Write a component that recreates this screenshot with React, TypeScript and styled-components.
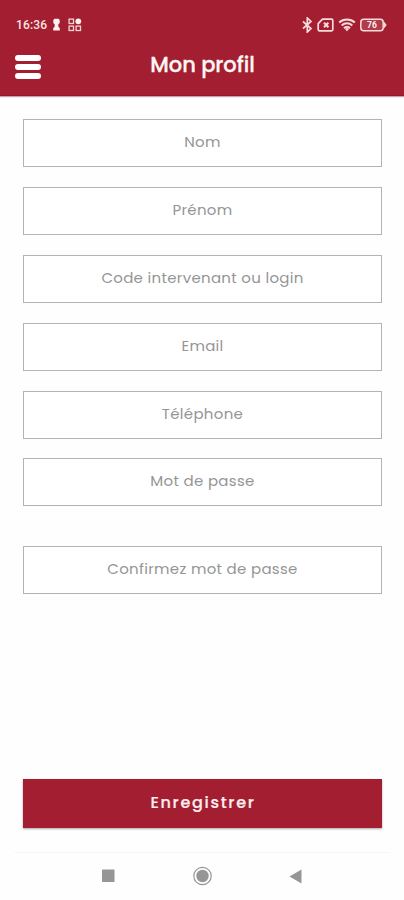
import React from 'react';
import styled, { createGlobalStyle } from 'styled-components';

interface FieldProps {
    label: string;
    separated?: boolean;
}

interface StyledFieldProps {
    $separated?: boolean;
}

const GlobalStyle = createGlobalStyle`
    * {
        box-sizing: border-box;
    }

    body {
        margin: 0;
        background: #fefefe;
        font-family: Poppins, Inter, sans-serif;
    }
`;

const StyledScreen = styled.div`
    display: flex;
    flex-direction: column;
    width: 404px;
    height: 900px;
    overflow: hidden;
    background: #fefefe;
`;

const StyledHeader = styled.header`
    flex: none;
    height: 96px;
    background: #a31e31;
    border-bottom: 1px solid #981526;
    box-shadow: 0 1px 1px rgba(120, 20, 35, 0.4);
`;

const StyledStatusBar = styled.div`
    display: flex;
    align-items: center;
    justify-content: space-between;
    height: 34px;
    padding: 16px 17px 0 16px;
`;

const StyledStatusGroup = styled.div`
    display: flex;
    align-items: center;
    height: 18px;

    svg {
        display: block;
    }
`;

const StyledIcons = styled(StyledStatusGroup)`
    gap: 4px;
`;

const StyledNotifications = styled(StyledStatusGroup)`
    gap: 7px;
`;

const StyledTime = styled.span`
    width: 36px;
    font-family: Roboto, sans-serif;
    font-size: 12px;
    font-weight: 500;
    line-height: 18px;
    letter-spacing: 0.15px;
    color: #fbe5e4;
`;

const StyledToolbar = styled.div`
    display: grid;
    grid-template-columns: 26px 1fr 26px;
    align-items: center;
    height: 61px;
    padding: 0 14px 0 15px;
`;

const StyledMenuButton = styled.button`
    display: flex;
    flex-direction: column;
    gap: 3px;
    margin: 4px 0 0;
    padding: 0;
    border: 0;
    background: none;
`;

const StyledMenuBar = styled.span`
    width: 26px;
    height: 6px;
    border-radius: 3px;
    background: #ffffff;
`;

const StyledTitle = styled.h1`
    margin: 0;
    text-align: center;
    font-size: 21px;
    font-weight: 500;
    line-height: 30px;
    letter-spacing: -0.05px;
    color: #fff6f4;
    -webkit-text-stroke: 0.3px #fff6f4;
`;

const StyledForm = styled.form`
    display: flex;
    flex: 1;
    flex-direction: column;
    padding: 23px 22px 24px 23px;
`;

const StyledField = styled.label<StyledFieldProps>`
    display: flex;
    justify-content: center;
    height: 48px;
    margin-top: ${({ $separated }) => ($separated ? '20px' : 0)};
    margin-bottom: 19.9px;
    padding-top: 11px;
    border: 1px solid #b3b3b3;
    background: #ffffff;
`;

const StyledPlaceholder = styled.span`
    font-size: 15px;
    font-weight: 400;
    line-height: 22px;
    letter-spacing: 0.3px;
    white-space: nowrap;
    color: #959595;
`;

const StyledSubmit = styled.button`
    height: 49px;
    margin-top: auto;
    padding: 0 0 3px 1px;
    border: 0;
    background: #a31e31;
    box-shadow: 0 1px 2px rgba(0, 0, 0, 0.35);
    font-family: inherit;
    font-size: 16px;
    font-weight: 500;
    letter-spacing: 1.7px;
    color: #ffeeee;
    -webkit-text-stroke: 0.2px #ffeeee;
`;

const StyledNavigation = styled.nav`
    display: flex;
    flex: none;
    align-items: center;
    justify-content: space-between;
    height: 48px;
    margin: 0 14px;
    padding: 0 88px 1px 87px;
    border-top: 1px solid #f7f7f7;
`;

const PawnIcon = () => (
    <svg width="9" height="14" viewBox="0 0 9 14" fill="#fff1ef">
        <path d="M2.5.8h4l1.200 1.300v2.800L6.300 6.500v2l1.500 1.700v2.400H1.200v-2.400l1.500-1.700v-2L1.300 4.900V2.100z" />
    </svg>
);

const AppsIcon = () => (
    <svg width="14" height="14" viewBox="0 0 14 14" fill="none" stroke="#f5d2d2" strokeWidth="1.3">
        <rect x="1.1" y="1.1" width="4.4" height="4.4" />
        <rect x="1.1" y="8.1" width="4.4" height="4.4" />
        <rect x="8.1" y="8.1" width="4.4" height="4.4" />
        <circle cx="10.3" cy="3.3" r="2.9" fill="#fff1ef" stroke="none" />
    </svg>
);

const BluetoothIcon = () => (
    <svg width="11" height="16" viewBox="0 0 11 16" fill="none" stroke="#f8dcdb" strokeWidth="1.7">
        <path d="M1 4.5l8 7L5.3 15V1L9 4.5l-8 7" />
    </svg>
);

const SimIcon = () => (
    <svg width="17" height="14" viewBox="0 0 17 14" fill="none" stroke="#f8dcdb" strokeWidth="1.7">
        <path
            d="M5.5 1.2h9a1.3 1.3 0 0 1 1.3 1.3v9a1.3 1.3 0 0 1-1.3 1.3h-12a1.3 1.3 0 0 1-1.3-1.3V5.7z"
            strokeLinejoin="round"
        />
        <path d="M7 4.8l4.4 4.4M11.4 4.8L7 9.2" strokeWidth="2" />
    </svg>
);

const WifiIcon = () => (
    <svg width="18" height="14" viewBox="0 0 18 14" fill="none" stroke="#f8dcdb" strokeWidth="2">
        <path d="M1.2 4.5a11.5 11.5 0 0 1 15.6 0M3.7 7.4a7.8 7.8 0 0 1 10.6 0M6 10.2a4.4 4.4 0 0 1 6 0" />
        <path d="M7 11a3 3 0 0 1 4 0l-2 2.3z" fill="#f8dcdb" stroke="none" />
    </svg>
);

const BatteryIcon = () => (
    <svg width="27" height="14" viewBox="0 0 27 14">
        <rect x="0.8" y="1.3" width="22.4" height="11.4" rx="3" fill="#b03b4b" stroke="#f8dcdb" strokeWidth="1.5" />
        <path d="M24 3.5L26.7 7 24 10.5z" fill="#f8dcdb" />
        <text
            x="12"
            y="10"
            textAnchor="middle"
            fontFamily="Roboto, sans-serif"
            fontSize="8.5"
            fontWeight="700"
            fill="#ffefed"
        >
            76
        </text>
    </svg>
);

const RecentIcon = () => (
    <svg width="14" height="14" viewBox="0 0 14 14">
        <rect x="1" y="0.5" width="12.5" height="12.5" rx="0.5" fill="#969696" />
    </svg>
);

const HomeIcon = () => (
    <svg width="20" height="20" viewBox="0 0 20 20">
        <circle cx="10.5" cy="10" r="8.7" fill="none" stroke="#969696" strokeWidth="1.2" />
        <circle cx="10.5" cy="10" r="6.2" fill="#969696" />
    </svg>
);

const BackIcon = () => (
    <svg width="13" height="15" viewBox="0 0 13 15">
        <path d="M12.5 0.5v14L0.5 7.5z" fill="#969696" />
    </svg>
);

const Field: React.FC<FieldProps> = ({ label, separated }: FieldProps) => {
    return (
        <StyledField $separated={separated}>
            <StyledPlaceholder>{label}</StyledPlaceholder>
        </StyledField>
    );
};

const App: React.FC = () => {
    return (
        <StyledScreen>
            <GlobalStyle />
            <StyledHeader>
                <StyledStatusBar>
                    <StyledStatusGroup>
                        <StyledTime>16:36</StyledTime>
                        <StyledNotifications>
                            <PawnIcon />
                            <AppsIcon />
                        </StyledNotifications>
                    </StyledStatusGroup>
                    <StyledIcons>
                        <BluetoothIcon />
                        <SimIcon />
                        <WifiIcon />
                        <BatteryIcon />
                    </StyledIcons>
                </StyledStatusBar>
                <StyledToolbar>
                    <StyledMenuButton type="button">
                        <StyledMenuBar />
                        <StyledMenuBar />
                        <StyledMenuBar />
                    </StyledMenuButton>
                    <StyledTitle>Mon profil</StyledTitle>
                </StyledToolbar>
            </StyledHeader>
            <StyledForm>
                <Field label="Nom" />
                <Field label="Prénom" />
                <Field label="Code intervenant ou login" />
                <Field label="Email" />
                <Field label="Téléphone" />
                <Field label="Mot de passe" />
                <Field label="Confirmez mot de passe" separated />
                <StyledSubmit type="button">Enregistrer</StyledSubmit>
            </StyledForm>
            <StyledNavigation>
                <RecentIcon />
                <HomeIcon />
                <BackIcon />
            </StyledNavigation>
        </StyledScreen>
    );
};

export default App;
